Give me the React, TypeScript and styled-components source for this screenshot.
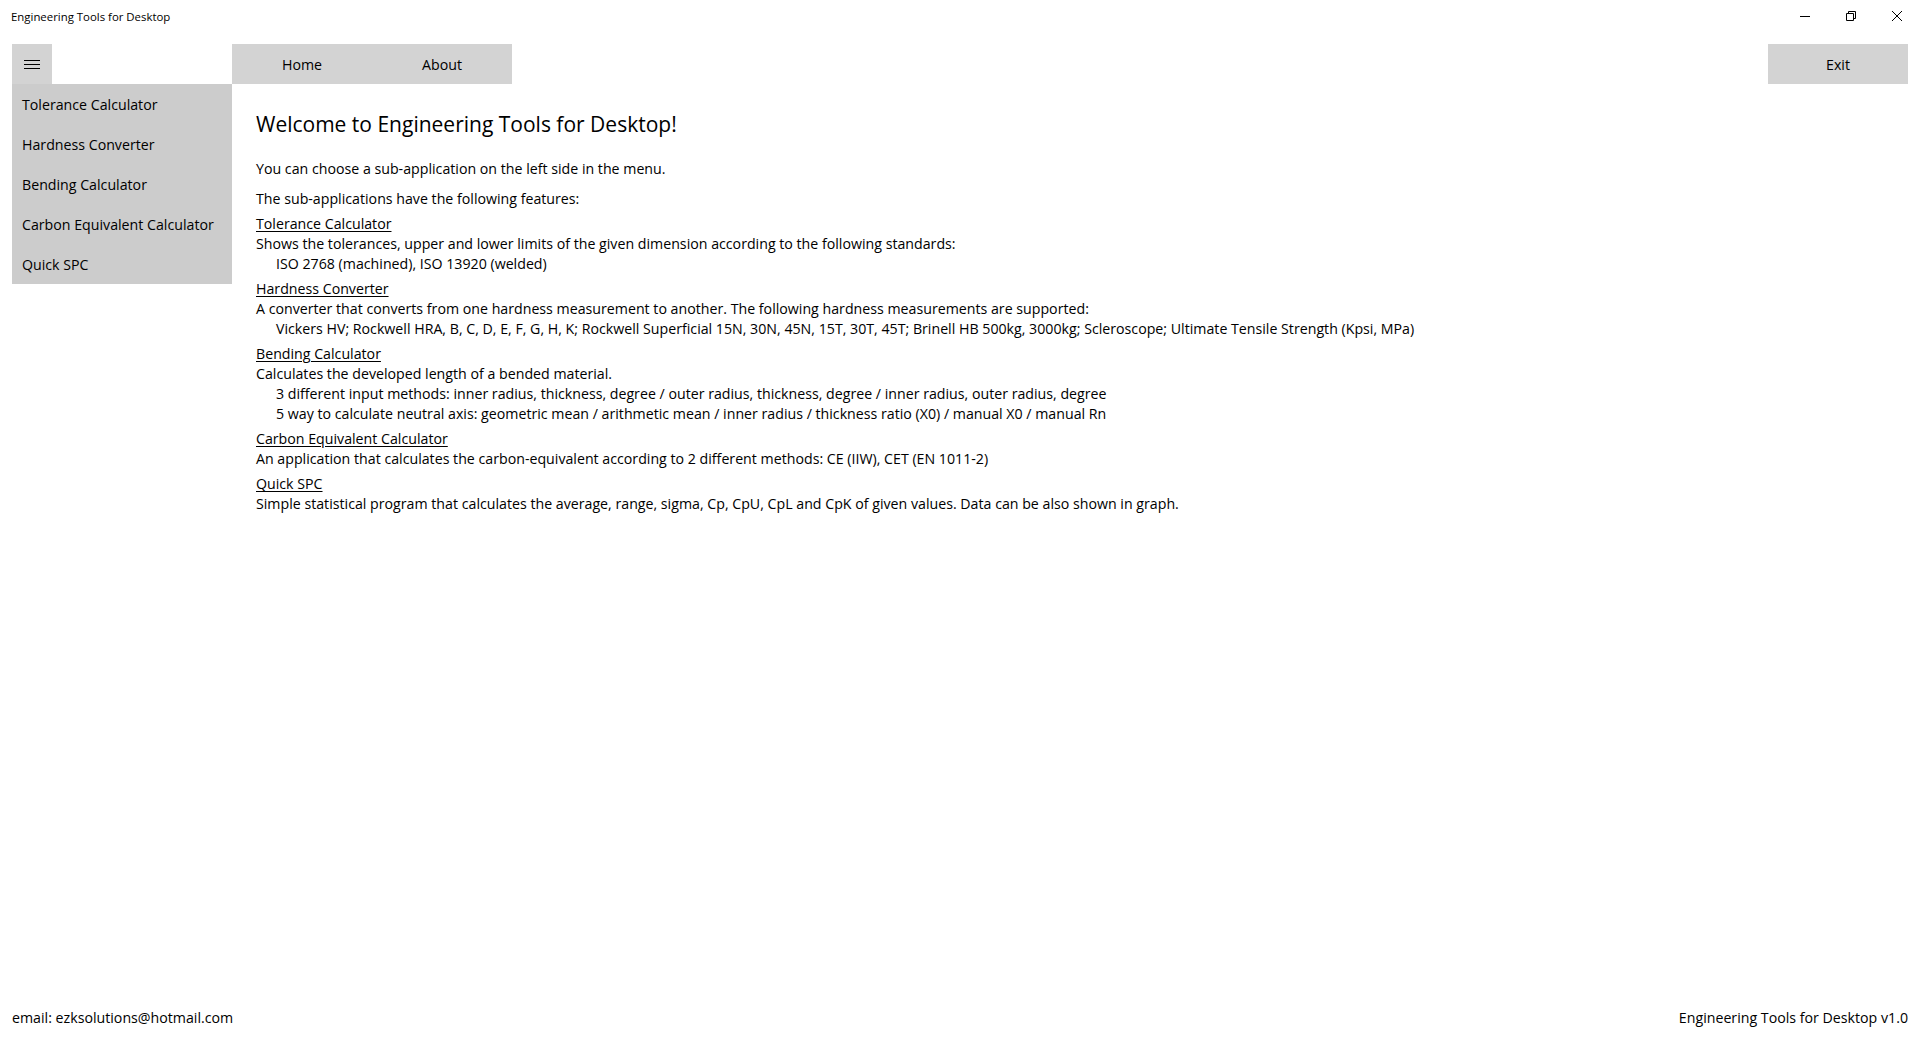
import React from 'react';
import styled, { createGlobalStyle } from 'styled-components';

const GlobalStyle = createGlobalStyle`
  html, body {
    margin: 0;
    padding: 0;
    background: #ffffff;
    overflow: hidden;
  }
  body {
    font-family: "Open Sans", "Noto Sans", sans-serif;
    color: #000000;
  }
`;

const Window = styled.div`
  display: flex;
  flex-direction: column;
  width: 100vw;
  height: 100vh;
`;

const TitleBar = styled.div`
  display: flex;
  align-items: center;
  height: 32px;
  flex-shrink: 0;
`;

const AppTitle = styled.div`
  padding-left: 11px;
  font-size: 11.4px;
`;

const WindowControls = styled.div`
  display: flex;
  margin-left: auto;
  height: 32px;
`;

const CaptionButton = styled.div`
  width: 46px;
  height: 32px;
  display: flex;
  align-items: center;
  justify-content: center;
`;

const Shell = styled.div`
  flex: 1;
  display: grid;
  grid-template-columns: 220px 1fr;
  grid-template-rows: 40px 1fr auto;
  padding: 12px;
  min-height: 0;
`;

const PaneToggle = styled.div`
  width: 40px;
  height: 40px;
  background: #d3d3d3;
  display: flex;
  align-items: center;
  justify-content: center;
`;

const TopBar = styled.div`
  display: flex;
  height: 40px;
`;

const NavBar = styled.div`
  display: flex;
  background: #d3d3d3;
`;

const BarButton = styled.div`
  width: 140px;
  height: 40px;
  display: flex;
  align-items: center;
  justify-content: center;
  font-size: 14.2px;
  background: #d3d3d3;
`;

const ExitButton = styled(BarButton)`
  margin-left: auto;
`;

const MenuPane = styled.div`
  align-self: start;
  background: #cccccc;
`;

const MenuItem = styled.div`
  height: 40px;
  display: flex;
  align-items: center;
  padding-left: 10px;
  font-size: 14.2px;
`;

const Content = styled.div`
  padding: 26px 24px 0 24px;
  font-size: 14.2px;
  line-height: 20px;
`;

const Heading = styled.h1`
  margin: 0 0 21px 0;
  font-size: 21px;
  font-weight: 400;
  line-height: 28px;
`;

const Paragraph = styled.p<{ $gap?: number }>`
  margin: 0 0 ${(p) => p.$gap ?? 0}px 0;
`;

const Section = styled.div`
  margin-top: 5px;
`;

const SectionTitle = styled.div`
  text-decoration: underline;
  text-underline-offset: 2px;
`;

const Line = styled.div<{ $indent?: boolean }>`
  padding-left: ${(p) => (p.$indent ? '20px' : '0')};
  white-space: nowrap;
`;

const Footer = styled.div`
  grid-column: 1 / -1;
  display: flex;
  justify-content: space-between;
  font-size: 14.2px;
  line-height: 20px;
`;

const menuItems = [
  'Tolerance Calculator',
  'Hardness Converter',
  'Bending Calculator',
  'Carbon Equivalent Calculator',
  'Quick SPC',
];

const features = [
  {
    title: 'Tolerance Calculator',
    text: 'Shows the tolerances, upper and lower limits of the given dimension according to the following standards:',
    details: ['ISO 2768 (machined), ISO 13920 (welded)'],
  },
  {
    title: 'Hardness Converter',
    text: 'A converter that converts from one hardness measurement to another. The following hardness measurements are supported:',
    details: [
      'Vickers HV; Rockwell HRA, B, C, D, E, F, G, H, K; Rockwell Superficial 15N, 30N, 45N, 15T, 30T, 45T; Brinell HB 500kg, 3000kg; Scleroscope; Ultimate Tensile Strength (Kpsi, MPa)',
    ],
  },
  {
    title: 'Bending Calculator',
    text: 'Calculates the developed length of a bended material.',
    details: [
      '3 different input methods: inner radius, thickness, degree / outer radius, thickness, degree / inner radius, outer radius, degree',
      '5 way to calculate neutral axis: geometric mean / arithmetic mean / inner radius / thickness ratio (X0) / manual X0 / manual Rn',
    ],
  },
  {
    title: 'Carbon Equivalent Calculator',
    text: 'An application that calculates the carbon-equivalent according to 2 different methods: CE (IIW), CET (EN 1011-2)',
    details: [],
  },
  {
    title: 'Quick SPC',
    text: 'Simple statistical program that calculates the average, range, sigma, Cp, CpU, CpL and CpK of given values. Data can be also shown in graph.',
    details: [],
  },
];

export default function App() {
  return (
    <Window>
      <GlobalStyle />
      <TitleBar>
        <AppTitle>Engineering Tools for Desktop</AppTitle>
        <WindowControls>
          <CaptionButton>
            <svg width="10" height="10" viewBox="0 0 10 10">
              <path d="M0 5.5h10" stroke="#000" strokeWidth="1" fill="none" />
            </svg>
          </CaptionButton>
          <CaptionButton>
            <svg width="10" height="10" viewBox="0 0 10 10">
              <path d="M0.5 2.5h7v7h-7z M2.5 2.5V0.5h7v7h-2" stroke="#000" strokeWidth="1" fill="none" />
            </svg>
          </CaptionButton>
          <CaptionButton>
            <svg width="10" height="10" viewBox="0 0 10 10">
              <path d="M0 0L10 10M10 0L0 10" stroke="#000" strokeWidth="1" fill="none" />
            </svg>
          </CaptionButton>
        </WindowControls>
      </TitleBar>

      <Shell>
        <PaneToggle>
          <svg width="16" height="12" viewBox="0 0 16 12">
            <path d="M0 2.5h16M0 6.5h16M0 10.5h16" stroke="#000" strokeWidth="1" fill="none" />
          </svg>
        </PaneToggle>
        <TopBar>
          <NavBar>
            <BarButton>Home</BarButton>
            <BarButton>About</BarButton>
          </NavBar>
          <ExitButton>Exit</ExitButton>
        </TopBar>

        <MenuPane>
          {menuItems.map((item) => (
            <MenuItem key={item}>{item}</MenuItem>
          ))}
        </MenuPane>

        <Content>
          <Heading>Welcome to Engineering Tools for Desktop!</Heading>
          <Paragraph $gap={10}>You can choose a sub-application on the left side in the menu.</Paragraph>
          <Paragraph>The sub-applications have the following features:</Paragraph>
          {features.map((f) => (
            <Section key={f.title}>
              <SectionTitle>{f.title}</SectionTitle>
              <Line>{f.text}</Line>
              {f.details.map((d) => (
                <Line $indent key={d}>
                  {d}
                </Line>
              ))}
            </Section>
          ))}
        </Content>

        <Footer>
          <span>email: ezksolutions@hotmail.com</span>
          <span>Engineering Tools for Desktop v1.0</span>
        </Footer>
      </Shell>
    </Window>
  );
}
